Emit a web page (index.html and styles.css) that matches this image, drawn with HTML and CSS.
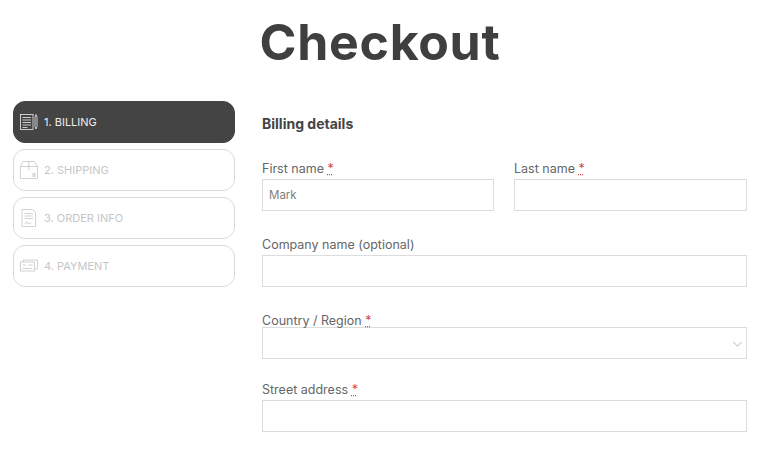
FILE: index.html
```html
<!DOCTYPE html>
<html lang="en">
<head>
  <meta charset="UTF-8" />
  <meta name="viewport" content="width=device-width, initial-scale=1.0"/>
  <title>Checkout</title>
  <link rel="stylesheet" href="styles.css">
</head>
<body>
  <h1 class="page-title">Checkout</h1>

  <section class="checkout">
    <ul class="steps">
      <li class="step active">
        <svg class="step-icon" viewBox="0 0 18 18" fill="none" stroke="currentColor" stroke-width="0.8">
          <rect x="0.5" y="1.500" width="12.500" height="15"/>
          <path d="M2.500 4.500h8.500M2.500 7h8.500M2.500 9.500h8.500M2.500 12h8.500M2.500 14.500h5"/>
          <path d="M15 4l1-2.500 1 2.500v9.500l-1 2.500-1-2.500z"/>
        </svg>
        <span>1. BILLING</span>
      </li>
      <li class="step">
        <svg class="step-icon" viewBox="0 0 18 18" fill="none" stroke="currentColor" stroke-width="0.8">
          <path d="M3 0.500h11.500l3 5v12H0.500V5.500z"/>
          <path d="M0.500 5.500h17M8.800 0.500v9"/>
          <path d="M12 13h4M12 15h4M14 12v4"/>
        </svg>
        <span>2. SHIPPING</span>
      </li>
      <li class="step">
        <svg class="step-icon" viewBox="0 0 18 18" fill="none" stroke="currentColor" stroke-width="0.8">
          <path d="M2 0.500h10.500l3 3v14H2z"/>
          <path d="M4.500 4.500h8.500M4.500 7h8.500M4.500 9.500h8.500"/>
          <path d="M5 15c1.500-3 2.500-3 2.500-1s1.500 0 4 0"/>
        </svg>
        <span>3. ORDER INFO</span>
      </li>
      <li class="step">
        <svg class="step-icon" viewBox="0 0 18 18" fill="none" stroke="currentColor" stroke-width="0.8">
          <rect x="0.500" y="5" width="14" height="9"/>
          <path d="M3 5V3h14.500v9h-3"/>
          <path d="M2.500 8h3.500M8.500 8h4M2.500 11.500h10"/>
        </svg>
        <span>4. PAYMENT</span>
      </li>
    </ul>

    <form class="billing">
      <h2>Billing details</h2>

      <div class="name-row">
        <div class="field">
          <label for="first-name">First name <abbr>*</abbr></label>
          <input type="text" id="first-name" value="Mark" />
        </div>
        <div class="field">
          <label for="last-name">Last name <abbr>*</abbr></label>
          <input type="text" id="last-name" />
        </div>
      </div>

      <div class="field company">
        <label for="company">Company name (optional)</label>
        <input type="text" id="company" />
      </div>

      <div class="field country">
        <label>Country / Region <abbr>*</abbr></label>
        <div class="select">
          <svg class="chevron" viewBox="0 0 12 7" fill="none" stroke="currentColor" stroke-width="1">
            <path d="M1 1l5 5 5-5"/>
          </svg>
        </div>
      </div>

      <div class="field street">
        <label for="street">Street address <abbr>*</abbr></label>
        <input type="text" id="street" />
      </div>
    </form>
  </section>
</body>
</html>
```
FILE: styles.css
```css
body {
  font-family: 'Inter', 'Open Sans', sans-serif;
  margin: 0;
  padding: 0;
  background: #fff;
  color: #444;
  overflow: hidden;
}

.page-title {
  margin: 0;
  padding: 12px 9px 0 0;
  height: 89px;
  box-sizing: border-box;
  text-align: center;
  font-size: 50px;
  line-height: 60px;
  font-weight: 700;
  letter-spacing: 0.7px;
  color: #3f3f3f;
}

.checkout {
  display: flex;
  align-items: flex-start;
  padding: 12px 22px 0 13px;
  gap: 27px;
}

.steps {
  list-style: none;
  margin: 0;
  padding: 0;
  width: 222px;
  flex-shrink: 0;
  display: flex;
  flex-direction: column;
  gap: 6px;
}

.step {
  display: flex;
  align-items: center;
  gap: 6px;
  height: 42px;
  box-sizing: border-box;
  padding-left: 6px;
  border: 1px solid #d9d9d9;
  border-radius: 12px;
  color: #c6c6c6;
  font-size: 11px;
  font-weight: 400;
}

.step.active {
  background: #444;
  border-color: #444;
  color: #eee;
}

.step-icon {
  width: 18px;
  height: 18px;
  flex-shrink: 0;
}

.billing {
  flex: 1;
}

.billing h2 {
  margin: 0;
  padding-top: 15px;
  font-size: 14px;
  line-height: 16px;
  font-weight: 700;
  color: #444;
}

.name-row {
  display: grid;
  grid-template-columns: 232px 1fr;
  gap: 20px;
  margin-top: 29px;
}

.field label {
  display: block;
  font-size: 12.5px;
  line-height: 16px;
  color: #666;
}

.field abbr {
  color: #d04a4a;
  text-decoration: underline dotted;
}

.field input,
.select {
  display: block;
  width: 100%;
  height: 32px;
  box-sizing: border-box;
  margin-top: 2px;
  padding: 0 6px;
  border: 1px solid #dcdcdc;
  border-radius: 0;
  background: #fff;
  font-family: inherit;
  font-size: 11.500px;
  color: #808080;
  outline: none;
}

.company {
  margin-top: 26px;
}

.country {
  margin-top: 26px;
}

.country .select {
  margin-top: -2px;
  padding-right: 3px;
  display: flex;
  align-items: center;
  justify-content: flex-end;
}

.chevron {
  width: 11px;
  height: 6px;
  margin-top: 2px;
  color: #aaa;
}

.street {
  margin-top: 23px;
}
```
